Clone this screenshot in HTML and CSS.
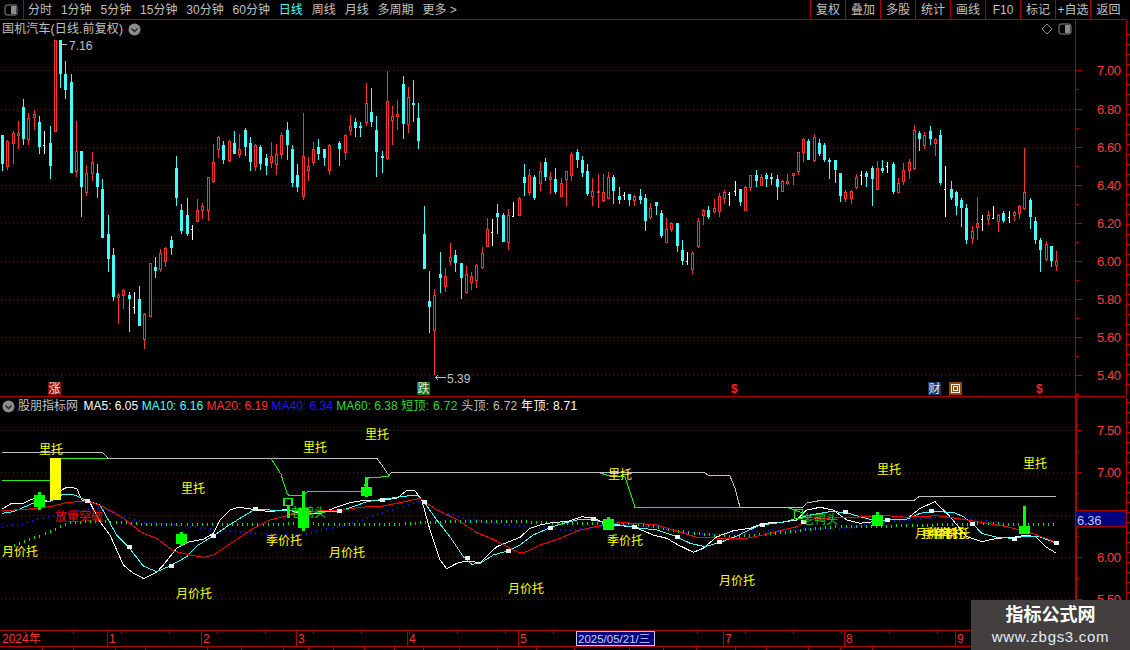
FILE: index.html
```html
<!DOCTYPE html>
<html lang="zh-CN">
<head>
<meta charset="utf-8">
<title>国机汽车</title>
<link rel="stylesheet" href="styles.css">
</head>
<body>
<div class="app">
  <header class="toolbar">
    <div class="tb-toggle">
      <svg class="toggle-icon" width="14" height="12" viewBox="0 0 14 12"><rect class="toggle-frame" x="1" y="1" width="12" height="10" rx="2"/><rect class="toggle-fill" x="7" y="2" width="5" height="8"/></svg>
    </div>
    <nav class="periods">
      <span>分时</span><span>1分钟</span><span>5分钟</span><span>15分钟</span><span>30分钟</span><span>60分钟</span><span class="is-active">日线</span><span>周线</span><span>月线</span><span>多周期</span><span>更多 &gt;</span>
    </nav>
    <nav class="tools">
      <span>复权</span><span>叠加</span><span>多股</span><span>统计</span><span>画线</span><span>F10</span><span>标记</span><span>+自选</span><span class="tool-last">返回</span>
    </nav>
  </header>

  <section class="pane pane-price">
    <div class="plot">
      <div class="pane-head">
        <span>国机汽车(日线.前复权)</span>
        <svg class="chev" width="13" height="13" viewBox="0 0 13 13"><circle class="chev-disc" cx="6.5" cy="6.5" r="6"/><path class="chev-mark" d="M3.5 5.5l3 3 3-3"/></svg>
      </div>
      <div class="pane-tools">
        <svg width="12" height="12" viewBox="0 0 12 12"><path class="diamond" d="M6 1l5 5-5 5-5-5z"/></svg>
        <svg width="14" height="12" viewBox="0 0 14 12"><rect class="toggle-frame" x="1" y="1" width="12" height="10" rx="2"/><rect class="toggle-fill" x="7" y="2" width="5" height="8"/></svg>
      </div>
      <svg id="price" class="canvas canvas-price" viewBox="0 20 1075 376">
        <text class="note" x="69" y="50">7.16</text>
        <text class="note" x="447" y="383">5.39</text>
        <g class="badge"><rect class="badge-up" x="48" y="382" width="13" height="13"/><text x="48.5" y="393">涨</text></g>
        <g class="badge"><rect class="badge-down" x="417" y="382" width="13" height="13"/><text x="417.5" y="393">跌</text></g>
        <text class="dollar" x="731" y="393">$</text>
        <g class="badge"><rect class="badge-cai" x="928" y="382" width="13" height="13"/><text x="928.5" y="393">财</text></g>
        <g><rect class="hui-back" x="949" y="382" width="13" height="13"/><rect class="hui-ring" x="951.5" y="384.5" width="8" height="8"/><rect class="hui-ring" x="953.5" y="386.5" width="4" height="4"/></g>
        <text class="dollar" x="1036" y="393">$</text>
      </svg>
    </div>
    <svg id="price-axis" class="axis axis-price" viewBox="1075 20 55 376">
      <text x="1097" y="75">7.00</text><text x="1097" y="114">6.80</text><text x="1097" y="152">6.60</text><text x="1097" y="190">6.40</text><text x="1097" y="228">6.20</text><text x="1097" y="266">6.00</text><text x="1097" y="304">5.80</text><text x="1097" y="342">5.60</text><text x="1097" y="380">5.40</text>
    </svg>
  </section>

  <section class="pane pane-ind">
    <div class="plot">
      <div class="ind-head">
        <svg class="chev" width="13" height="13" viewBox="0 0 13 13"><circle class="chev-disc" cx="6.5" cy="6.5" r="6"/><path class="chev-mark" d="M3.5 5.5l3 3 3-3"/></svg>
        <span class="ind-name">股朋指标网</span>
        <span class="c-white">MA5: 6.05</span><span class="c-cyan">MA10: 6.16</span><span class="c-red">MA20: 6.19</span><span class="c-blue">MA40: 6.34</span><span class="c-green">MA60: 6.38</span><span class="c-green wide">短顶: 6.72</span><span class="c-grey wide">头顶: 6.72</span><span class="c-white wide">年顶: 8.71</span>
      </div>
      <svg id="ind" class="canvas canvas-ind" viewBox="0 397 1075 233"></svg>
    </div>
    <svg id="ind-axis" class="axis axis-ind" viewBox="1075 397 55 233">
      <text x="1097" y="435">7.50</text><text x="1097" y="477">7.00</text><text x="1097" y="562">6.00</text><text x="1097" y="604">5.50</text>
    </svg>
    <div class="last-price">6.36</div>
  </section>

  <svg id="time" class="timebar" viewBox="0 630 1130 17">
    <text x="2" y="643">2024年</text><text x="109" y="643">1</text><text x="203" y="643">2</text><text x="298" y="643">3</text><text x="409" y="643">4</text><text x="520" y="643">5</text>
    <rect class="time-cursor" x="576.5" y="631.5" width="78" height="14"/>
    <text class="time-cursor-text" x="578" y="643">2025/05/21/三</text>
    <text x="725" y="643">7</text><text x="846" y="643">8</text><text x="957" y="643">9</text>
  </svg>
  <svg id="status" class="statusbar" viewBox="0 647 1130 3"></svg>

  <aside class="watermark">
    <strong>指标公式网</strong>
    <span>www.zbgs3.com</span>
  </aside>
</div>
<script src="script.js"></script>
</body>
</html>
```

FILE: styles.css
```css
* { box-sizing: border-box; }
html, body { margin: 0; padding: 0; background: #000; }
body { width: 1130px; height: 650px; overflow: hidden; font: 12px/1 "Liberation Sans", "Noto Sans CJK SC", sans-serif; color: #c0c0c0; }
.app { position: relative; width: 1130px; height: 650px; display: flex; flex-direction: column; background: #000; overflow: hidden; }

.toolbar { flex: 0 0 20px; width: 1126px; display: flex; align-items: stretch; border-bottom: 1px solid #b00000; }
.tb-toggle { flex: 0 0 24px; display: flex; align-items: center; justify-content: center; border-right: 1px solid #b00000; padding-right: 1px; }
.toggle-frame { fill: none; stroke: #8c8c8c; }
.toggle-fill { fill: #8c8c8c; }
.periods { display: flex; align-items: center; gap: 8.9px; padding-left: 4px; }
.periods .is-active { color: #4ff; }
.tools { margin-left: auto; display: flex; }
.tools span { width: 35px; display: flex; align-items: center; justify-content: center; border-left: 1px solid #b00000; white-space: nowrap; }
.tools .tool-last { width: 36px; }

.pane { display: flex; position: relative; }
.pane-price { flex: 0 0 377px; border-bottom: 1px solid #b00000; width: 1126px; }
.pane-ind { flex: 0 0 233px; }
.plot { position: relative; width: 1075px; flex: 0 0 1075px; }
.canvas, .axis, .timebar, .statusbar { display: block; }
.canvas-price { width: 1075px; height: 376px; }
.canvas-ind { width: 1075px; height: 233px; }
.axis-price { width: 55px; height: 376px; flex: 0 0 55px; }
.axis-ind { width: 55px; height: 233px; flex: 0 0 55px; }

.pane-head { position: absolute; left: 2px; top: 2px; display: flex; align-items: center; gap: 5px; height: 14px; z-index: 1; white-space: nowrap; letter-spacing: .15px; }
.pane-tools { position: absolute; left: 1041px; top: 3px; display: flex; align-items: center; gap: 5px; z-index: 1; }
.diamond { fill: none; stroke: #8c8c8c; }
.chev-disc { fill: #8c8c8c; }
.chev-mark { fill: none; stroke: #222; stroke-width: 1.4; }

.ind-head { position: absolute; left: 2px; top: 2px; display: flex; align-items: center; height: 14px; white-space: nowrap; z-index: 1; }
.ind-head span { margin-left: 3.5px; }
.ind-head .wide { letter-spacing: .3px; }
.ind-head .ind-name { margin-left: 3px; margin-right: 2px; color: #c0c0c0; }
.c-white { color: #fff; }
.c-cyan { color: #4ff; }
.c-red { color: #ff3232; }
.c-blue { color: #1a1aff; }
.c-green { color: #2fdc2f; }
.c-grey { color: #c0c0c0; }

.axis text { font-size: 13px; fill: #ff3c3c; letter-spacing: -.45px; }
.axis-line { stroke: #b00000; shape-rendering: crispEdges; }
.axis-line-bold { stroke: #b00000; stroke-width: 2; shape-rendering: crispEdges; }

.last-price { position: absolute; left: 1076px; top: 113px; width: 50px; height: 17px; padding: 3px 0 0 1px; background: #000080; border-top: 1px solid #b00000; border-bottom: 1px solid #b00000; color: #b8c8e8; font-size: 13px; letter-spacing: -.3px; }

.grid { stroke: #8c0000; stroke-dasharray: 1 3; shape-rendering: crispEdges; }
.wick-c { fill: #4ff; }
.wick-r { fill: #ff3232; }
.wick-w { fill: #fff; }
.body-c { fill: #4ff; }
.body-r { fill: #000; stroke: #ff3232; shape-rendering: crispEdges; }
.note { font-size: 12px; fill: #c0c0c0; letter-spacing: .05px; }
.note-arrow { fill: none; stroke: #c0c0c0; shape-rendering: crispEdges; }
.badge text { font-size: 12px; fill: #e8e8e8; }
.badge-up { fill: #8c0f0f; }
.badge-down { fill: #0a7a0a; }
.badge-cai { fill: #0f3a6e; }
.hui-back { fill: #8a4a14; }
.hui-ring { fill: none; stroke: #f4f0e0; }
.dollar { font-size: 12px; font-weight: 700; fill: #ff2020; }

.line { fill: none; shape-rendering: crispEdges; }
.l-white { stroke: #fff; }
.l-cyan { stroke: #4ff; }
.l-red { stroke: #f00; }
.l-grey { stroke: #c0c0c0; }
.l-green { stroke: #1ef01e; }
.dot-blue { fill: #1414ff; }
.dot-green { fill: #12e812; }
.marker { fill: #e4f4f4; }
.g-fill { fill: #0f0; }
.y-fill { fill: #ff0; }
.g-hollow { fill: none; stroke: #0f0; stroke-width: 1.5; shape-rendering: crispEdges; }
.lbl { font-size: 12px; fill: #ff0; }
.lbl-red { font-size: 12px; fill: #f00; }
.lbl-green { font-size: 12px; fill: #12d812; }

.timebar { width: 1130px; height: 17px; flex: 0 0 17px; }
.timebar text { font-size: 12px; fill: #ff3232; }
.timebar .time-cursor-text { fill: #c8d4f4; font-size: 11.5px; }
.time-cursor { fill: #000080; stroke: #c8c8e8; }
.statusbar { width: 1130px; height: 3px; flex: 0 0 3px; }

.watermark { position: absolute; left: 971px; top: 600px; width: 159px; height: 50px; background: #423f3e; display: flex; flex-direction: column; align-items: center; padding: 5px 0 0 0; gap: 4px; }
.watermark strong { font-size: 18px; line-height: 20px; color: #fff; font-weight: 700; }
.watermark span { font-size: 15px; line-height: 16px; color: #e2ecfa; letter-spacing: .7px; }
```

FILE: script.js
```js
var NS = 'http://www.w3.org/2000/svg';
function add(svg, tag, attrs, cls, before) {
  var el = document.createElementNS(NS, tag);
  for (var k in attrs) el.setAttribute(k, attrs[k]);
  if (cls) el.setAttribute('class', cls);
  if (before) svg.insertBefore(el, svg.firstChild); else svg.appendChild(el);
  return el;
}
var price = document.getElementById('price');
var ind = document.getElementById('ind');
var priceAxis = document.getElementById('price-axis');
var indAxis = document.getElementById('ind-axis');
var timeSvg = document.getElementById('time');
var statusSvg = document.getElementById('status');

var candleGroup = add(price, 'g', {}, null, true);
var priceGrid = add(price, 'g', {}, null, true);
[70.5, 109.5, 147.5, 185.5, 223.5, 261.5, 299.5, 337.5, 375.5].forEach(function (y) {
  add(priceGrid, 'line', { x1: 1, x2: 1075, y1: y, y2: y }, 'grid');
});

/* candles: type, x, high, body top, body bottom, low, in reference crop units (3x) */
var SEGMENTS = [
[0, 30, `c 7 315 315 402 422|r 22 330 334 410 420|r 40 303 310 341 402|r 55 273 310 317 356|c 70 207 232 327 345|r 85 250 265 329 345|r 103 240 253 265 300|c 118 258 276 351 372|w 133 303 345 345 372|c 151 288 339 408 447|r 166 30 30 305 305|c 181 30 30 132 174|c 196 93 132 180 207|c 214 132 156 429 429|r 229 273 364 426 441|c 244 363 363 471 561|r 259 405 430 489 498|r 277 366 397 431 453|c 292 402 429 471 504|c 307 447 477 624 624|c 325 555 612 687 726|c 340 654 675 801 813|r 355 789 795 803 882|r 370 778 780 797 837|c 388 786 795 807 906|w 403 786 831 831 852|c 418 768 807 888 888|r 433 850 852 930 957|r 451 699 699 861 861|c 466 681 711 723 744|r 481 657 669 720 726|r 496 651 654 696 711|c 514 618 630 654 675|c 529 378 414 504 528|c 544 522 540 604 612|c 562 504 555 612 618|w 577 585 597 597 630|r 592 507 541 576 576|r 607 520 528 542 567|r 625 441 441 543 573|r 640 342 396 456 459|r 655 318 321 360 384|c 670 333 345 390 402|r 688 330 333 393 396|c 703 303 339 372 372|r 718 312 357 375 384|c 736 294 300 351 378|c 751 321 339 396 423|r 766 343 345 411 423|c 781 345 351 402 420|c 799 372 384 408 435|r 814 336 378 399 414|r 829 342 372 405 435|r 844 306 315 375 387|c 862 276 300 345 390|c 877 345 357 459 471|c 892 402 435 471 486`],
[300, 60, `r 10 159 288 411 420|r 25 291 318 333 363|r 40 246 267 309 318|c 55 237 261 282 300|c 73 267 267 294 318|r 88 252 255 333 345|c 118 243 249 267 318|r 136 222 225 279 300|r 151 165 198 213 225|c 166 174 186 204 231|c 181 186 198 204 231|r 199 69 129 189 198|c 214 84 156 186 201|c 229 168 210 276 351|c 247 273 288 294 339|r 262 33 123 298 300|r 277 138 168 183 255|r 292 120 162 171 210|c 310 48 72 192 237|r 325 81 111 195 219|c 340 60 129 135 186|c 355 129 174 243 267|c 373 438 522 627 627|c 388 633 723 741 819|r 403 687 705 813 945|c 421 576 642 654 699|r 436 624 648 681 696|r 451 549 591 606 615|c 466 570 585 609 636|c 484 609 609 654 717|r 499 618 642 699 699|r 514 636 648 669 690|r 529 612 615 663 684|r 547 561 579 624 627|r 562 474 507 561 561|w 577 477 517 517 558|c 592 432 459 471 522|c 610 459 465 546 546|r 625 447 465 549 570|w 640 426 468 468 471|r 658 411 414 468 468|c 673 312 351 369 408|r 688 327 345 399 408|c 703 345 351 414 420|r 721 306 333 372 393|c 736 294 306 351 363|r 751 336 351 360 402|c 766 324 357 396 402|r 784 354 369 411 411|r 799 333 333 360 438|r 814 276 282 348 363|c 832 267 276 300 324|c 847 288 300 339 351|c 862 312 333 402 408|r 877 354 393 411 438|r 895 342 393 399 444`],
[600, 110, `r 10 192 246 273 276|r 25 186 201 267 267|c 40 195 201 243 282|c 58 231 258 270 282|w 73 246 255 255 270|c 88 252 252 270 288|r 103 255 258 273 288|c 121 237 258 270 282|c 136 252 264 333 363|r 151 279 294 324 327|c 169 276 276 288 315|c 184 300 309 378 384|r 199 324 357 399 399|r 214 336 339 360 366|c 232 339 339 408 426|c 247 390 420 453 465|w 262 426 453 453 465|r 277 423 429 480 492|r 295 324 333 411 414|r 310 297 300 318 345|c 325 288 300 321 327|r 343 267 294 306 309|r 358 249 258 306 321|r 373 240 246 267 282|w 388 246 252 252 288|w 406 213 243 243 258|c 421 237 237 276 288|r 436 228 231 303 303|r 451 195 195 234 243|c 469 180 195 213 231|r 484 192 201 228 228|c 499 189 195 207 231|c 514 189 201 207 225|c 532 195 207 231 270|r 547 210 213 246 246|r 562 192 213 222 225|r 580 189 189 198 225|r 595 126 126 186 195|r 610 84 87 129 156|c 625 87 93 150 150|r 643 72 81 153 156|c 658 87 99 132 138|c 673 99 105 150 156|c 688 144 150 156 207|c 706 150 150 180 219|c 721 189 189 258 276|r 736 240 246 267 276`],
[850, 110, `r 4 240 243 267 282|r 19 192 201 234 237|w 34 183 195 195 225|c 49 183 189 201 231|c 67 168 174 207 288|r 82 153 174 240 240|c 97 150 174 183 189|w 112 156 168 168 189|c 130 156 162 246 252|r 145 204 219 249 249|r 160 159 180 216 225|r 178 147 156 183 207|r 193 45 60 177 180|c 208 63 69 87 123|r 223 66 75 108 117|c 241 48 63 87 105|r 256 84 87 102 138|c 271 60 75 219 225|w 286 168 238 238 321|c 304 213 237 264 270|c 319 243 246 288 315|c 334 264 270 294 351|c 349 282 294 390 402|r 367 348 363 387 402|r 382 261 339 354 390|w 397 315 327 327 363|r 415 303 315 330 345|w 430 288 324 324 327|r 445 312 315 336 366|c 460 303 309 333 339|w 478 303 321 321 339|r 493 303 306 318 333|r 508 285 288 312 327|r 523 114 246 297 300|c 541 264 270 321 357|c 556 321 333 390 402|c 571 384 390 420 486|r 589 393 402 450 453|c 604 408 408 453 471|r 619 423 453 468 483`]
];
SEGMENTS.forEach(function (seg) {
  seg[2].split('|').forEach(function (row) {
    var p = row.split(' ');
    var type = p[0];
    var cx = Math.floor(seg[0] + (+p[1]) / 3);
    var Y = function (v) { return Math.round(seg[1] + (+v) / 3); };
    var hi = Y(p[2]), top = Y(p[3]), bot = Y(p[4]), lo = Y(p[5]);
    add(candleGroup, 'rect', { x: cx, y: hi, width: 1, height: Math.max(1, lo - hi) }, 'wick-' + type);
    if (type === 'c') {
      add(candleGroup, 'rect', { x: cx - 1, y: top, width: 3, height: Math.max(1, bot - top) }, 'body-c');
    } else if (type === 'r') {
      add(candleGroup, 'rect', { x: cx - 0.5, y: top + 0.5, width: 2, height: Math.max(1, bot - top - 1), transform: 'translate(-0.5 0)' }, 'body-r');
    } else {
      add(candleGroup, 'rect', { x: cx - 1, y: top, width: 1, height: 1 }, 'wick-w');
    }
  });
});

/* price notes */
add(price, 'path', { d: 'M61.5 44.5h5M60 44.5l2-1.5M60 44.5l2 1.5' }, 'note-arrow');
add(price, 'path', { d: 'M435 377.5h11M435 377.5l3-2M435 377.5l3 2' }, 'note-arrow');

/* axes */
function ticks(svg, x1, x2, from, to, step, cls) {
  for (var y = from; y <= to; y += step) {
    add(svg, 'line', { x1: x1, x2: x2, y1: y + 0.5, y2: y + 0.5 }, cls || 'axis-line');
  }
}
add(priceAxis, 'line', { x1: 1075.5, x2: 1075.5, y1: 20, y2: 396 }, 'axis-line');
add(priceAxis, 'line', { x1: 1126.5, x2: 1126.5, y1: 20, y2: 396 }, 'axis-line');
[70, 109, 147, 185, 223, 261, 299, 337, 375].forEach(function (y) {
  add(priceAxis, 'line', { x1: 1075, x2: 1082, y1: y + 0.5, y2: y + 0.5 }, 'axis-line');
  if (y + 19 < 396) add(priceAxis, 'line', { x1: 1075, x2: 1079, y1: y + 19.5, y2: y + 19.5 }, 'axis-line');
});
ticks(priceAxis, 1127, 1130, 34, 390, 10);

add(indAxis, 'line', { x1: 1076, x2: 1076, y1: 397, y2: 630 }, 'axis-line-bold');
add(indAxis, 'line', { x1: 1126.5, x2: 1126.5, y1: 397, y2: 630 }, 'axis-line');
[430, 472, 515, 557, 599].forEach(function (y) {
  add(indAxis, 'line', { x1: 1075, x2: 1082, y1: y + 0.5, y2: y + 0.5 }, 'axis-line');
});
[451, 493, 536, 578, 620].forEach(function (y) {
  add(indAxis, 'line', { x1: 1075, x2: 1079, y1: y + 0.5, y2: y + 0.5 }, 'axis-line');
});
ticks(indAxis, 1127, 1130, 402, 625, 10);

/* indicator */
[430.5, 472.5, 515.5, 557.5, 599.5].forEach(function (y) {
  add(ind, 'line', { x1: 1, x2: 1075, y1: y, y2: y }, 'grid');
});
function pts(ox, oy, s) {
  return s.split(' ').map(function (p) {
    var a = p.split(',');
    return [ox + (+a[0]) / 3, oy + (+a[1]) / 3];
  });
}
function poly(list, cls) {
  add(ind, 'polyline', { points: list.map(function (p) { return p[0].toFixed(1) + ',' + p[1].toFixed(1); }).join(' ') }, 'line ' + cls);
}
function at(list, x) {
  for (var i = 1; i < list.length; i++) {
    if (x <= list[i][0]) {
      var a = list[i - 1], b = list[i];
      return a[1] + (b[1] - a[1]) * (x - a[0]) / (b[0] - a[0]);
    }
  }
  return list[list.length - 1][1];
}
function dots(list, start, end, w, h, cls) {
  for (var x = start; x <= end; x += 5.07) {
    add(ind, 'rect', { x: Math.round(x), y: Math.round(at(list, x)), width: w, height: h }, cls);
  }
}
var blue = pts(0, 480, '5,138 60,130 120,112 180,100 240,88 300,80 350,100 430,125 500,130 600,140 700,150 800,160 900,162 1000,140 1060,125 1130,100 1200,80 1260,60 1330,95 1400,115 1500,130 1560,135')
  .concat(pts(520, 480, '60,140 130,147 180,145 250,135 330,132 420,140 500,155 580,160 700,150 850,145 950,145 1050,130 1150,118 1250,108 1350,115 1440,126'));
var green = pts(0, 480, '10,200 35,195 70,180 120,163 160,145 200,125 260,120 340,122 430,128 500,128 620,128 700,130 800,130 900,125 1000,130 1100,128 1200,128 1300,122 1400,120 1560,120')
  .concat(pts(520, 480, '100,125 200,125 300,125 400,135 480,150 560,160 640,165 720,160 840,147 950,135 1050,135 1200,132 1300,128 1400,127 1608,130'));
dots(blue, 2, 1000, 1, 2, 'dot-blue');
dots(green, 4, 1056, 1, 3, 'dot-green');

poly([[2, 452.3], [102.5, 452.3], [108, 458.3], [377, 458.3], [383, 466.7], [388.5, 475], [392, 472.3], [600, 472.3], [704, 472.3], [708, 475], [730, 476], [735, 488], [740, 507.3], [803, 507.3], [808, 502.3], [816, 501.7], [819, 500.3], [914, 500.3], [919.5, 496.3], [1056, 496.3]], 'l-grey');
poly([[2, 480.5], [50, 480.5]], 'l-green');
poly([[61, 458.5], [107, 458.5]], 'l-green');
poly([[271, 458.3], [281, 474.3], [287, 493.3], [289, 495.5], [302, 495.5], [308, 491.5], [361, 491.5]], 'l-green');
poly([[364, 486], [369, 477.5], [388, 476.7], [391, 473]], 'l-green');
poly([[600, 473], [607, 475], [625, 476.7], [630, 491.7], [635, 507.5], [740, 507.5]], 'l-green');
poly([[789, 508], [803, 513]], 'l-green');

var white = pts(0, 480, '5,88 35,70 65,72 85,62 105,55 150,65 185,30 200,22 230,25 245,60 270,68 300,125 330,165 350,210 370,255 400,280 432,296 470,277 490,255 530,205 570,185 610,178 640,160 660,120 690,90 715,82 760,88 810,95 860,88 895,100 925,100 960,102 1000,85 1050,68 1100,60 1150,60 1190,55 1220,32 1245,32 1265,60 1290,150 1320,240 1340,266 1370,250 1400,243 1440,248 1490,200 1520,188')
  .concat(pts(520, 480, '0,172 30,145 60,135 100,127 140,125 185,110 220,115 270,135 340,140 400,165 440,175 475,195 520,217 550,205 590,170 640,152 690,145 730,130 790,126 830,120 860,90 900,82 940,90 980,120 1020,130 1060,125 1100,120 1160,118 1200,85 1245,65 1290,110 1340,170 1385,185 1430,175 1480,172 1520,165'), [[1036, 537], [1046, 547], [1056, 553]]);
var cyan = pts(0, 480, '5,100 40,95 80,78 110,65 150,65 190,42 215,42 240,52 260,62 300,75 325,120 350,165 385,200 430,258 470,275 510,258 560,230 590,198 640,168 680,140 720,115 765,88 810,90 860,90 895,95 925,95 1020,93 1060,80 1100,65 1150,58 1200,50 1250,45 1272,65 1310,120 1350,170 1390,230 1415,253 1440,250 1480,225 1525,212')
  .concat(pts(520, 480, '0,195 40,165 90,143 130,130 180,118 220,120 270,130 340,142 410,150 470,170 510,190 555,200 600,187 650,168 720,135 790,127 830,115 870,105 930,95 975,97 1020,110 1060,120 1100,120 1160,118 1200,100 1240,95 1300,97 1330,110 1360,133 1385,160 1430,172 1480,175 1520,168'), [[1040, 537], [1056, 543]]);
var red = pts(0, 480, '5,92 80,88 150,80 200,68 260,62 310,80 370,115 425,158 470,175 520,213 570,225 610,232 640,225 700,185 760,145 810,120 870,105 960,92 1030,90 1080,82 1150,78 1200,68 1260,55 1310,90 1370,118 1430,158 1480,178 1540,210')
  .concat(pts(520, 480, '0,218 20,215 60,195 120,175 180,150 250,135 300,128 350,130 410,135 460,150 530,172 610,175 680,175 730,165 830,140 860,120 900,115 1000,112 1100,107 1160,112 1250,107 1310,115 1400,130 1460,140'), [[1031, 533], [1056, 542]]);
poly(white, 'l-white');
poly(cyan, 'l-cyan');
poly(red, 'l-red');

pts(0, 480, '260,62 388,200 514,258 640,168 766,86 1018,93 1147,60 1272,65 1400,234 1525,212')
  .concat(pts(520, 480, '90,143 218,118 343,140 472,170 598,187 725,134 850,125 976,97 1102,120 1232,92 1357,131 1483,176'), [[1056, 543]])
  .forEach(function (p) {
    add(ind, 'rect', { x: Math.round(p[0]) - 2, y: Math.round(p[1]) - 2, width: 5, height: 4 }, 'marker');
  });

/* signal blocks: x, y, width, height in page pixels */
[[50, 458, 11, 42, 'y-fill'],
 [34, 495, 11, 12, 'g-fill'], [38, 492, 3, 18, 'g-fill'],
 [176, 534, 11, 10, 'g-fill'], [180, 532, 3, 14, 'g-fill'],
 [361, 487, 11, 9, 'g-fill'], [365, 477, 3, 20, 'g-fill'],
 [298, 508, 11, 20, 'g-fill'], [302, 491, 3, 40, 'g-fill'],
 [287, 505, 3, 13, 'g-fill'],
 [603, 519, 11, 11, 'g-fill'], [607, 517, 3, 3, 'g-fill'],
 [872, 515, 11, 11, 'g-fill'], [876, 512, 3, 3, 'g-fill'],
 [1019, 526, 11, 8, 'g-fill'], [1023, 506, 3, 20, 'g-fill']
].forEach(function (r) {
  add(ind, 'rect', { x: r[0], y: r[1], width: r[2], height: r[3] }, r[4]);
});
add(ind, 'rect', { x: 284, y: 498.5, width: 8, height: 7 }, 'g-hollow');
add(ind, 'rect', { x: 794.5, y: 509.5, width: 8, height: 9 }, 'g-hollow');

[['里托', 39, 454], ['里托', 303, 452], ['里托', 365, 439], ['里托', 181, 493], ['月价托', 2, 556], ['季价托', 266, 545], ['月价托', 329, 557], ['月价托', 176, 598], ['月价托', 508, 593], ['里托', 608, 479], ['季价托', 607, 545], ['月价托', 719, 585], ['里托', 877, 474], ['里托', 1023, 468], ['月价托', 915, 538], ['季价托', 922, 538], ['半年托', 929, 538], ['年价托', 934, 538], ['年托', 941, 538]].forEach(function (t) {
  add(ind, 'text', { x: t[1], y: t[2] }, 'lbl').textContent = t[0];
});
add(ind, 'text', { x: 55, y: 521 }, 'lbl-red').textContent = '放量突破';
add(ind, 'text', { x: 290, y: 517 }, 'lbl-green').textContent = '老鸭头';
add(ind, 'text', { x: 802, y: 524 }, 'lbl-green').textContent = '老鸭头';

/* time axis */
add(timeSvg, 'line', { x1: 0, x2: 1126, y1: 630.5, y2: 630.5 }, 'axis-line', true);
add(timeSvg, 'line', { x1: 0, x2: 1126, y1: 646.5, y2: 646.5 }, 'axis-line', true);
[107, 201, 296, 407, 518, 723, 844, 955].forEach(function (x) {
  add(timeSvg, 'line', { x1: x + 0.5, x2: x + 0.5, y1: 631, y2: 646 }, 'axis-line', true);
});
for (var tx = 25; tx < 1070; tx += 48) {
  add(timeSvg, 'line', { x1: tx + 0.5, x2: tx + 0.5, y1: 631, y2: 634 }, 'axis-line', true);
}
[42, 73, 115, 145, 207, 241, 283, 308, 333, 364, 394, 423, 459, 497, 536, 574, 629, 663, 696, 735, 766, 808, 840, 872].forEach(function (x) {
  add(statusSvg, 'line', { x1: x + 0.5, x2: x + 0.5, y1: 647, y2: 650 }, 'axis-line');
});
```
